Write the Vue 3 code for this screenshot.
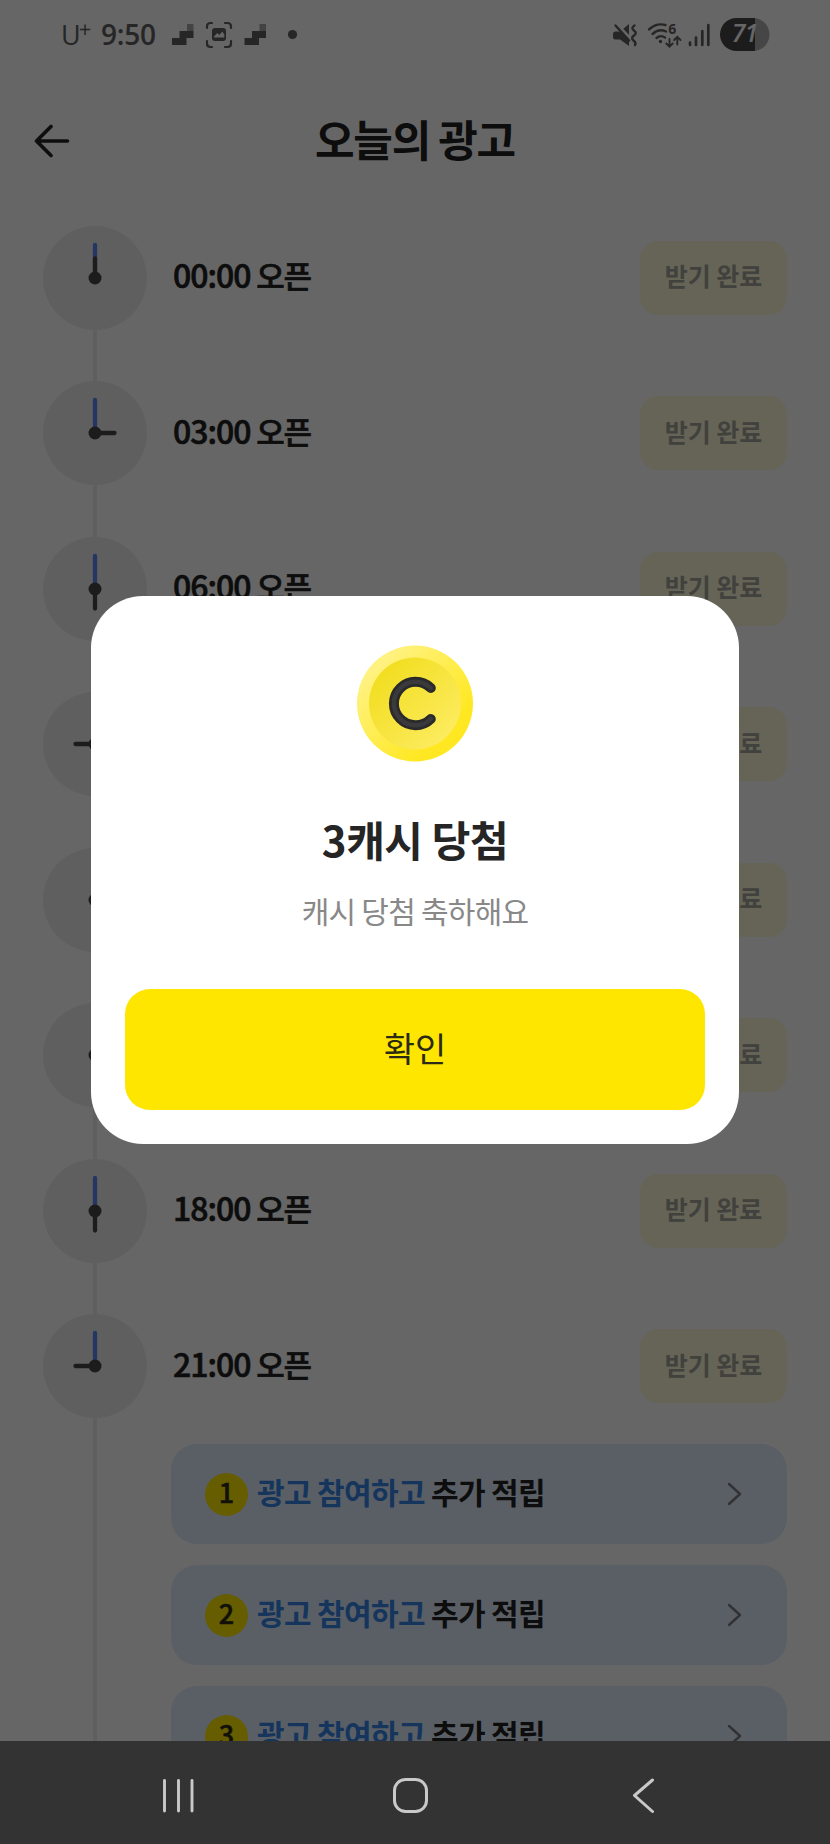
<script setup>
const rows = [
  { time: '00:00', angle: 0 },
  { time: '03:00', angle: 90 },
  { time: '06:00', angle: 180 },
  { time: '09:00', angle: 270 },
  { time: '12:00', angle: 0 },
  { time: '15:00', angle: 90 },
  { time: '18:00', angle: 180 },
  { time: '21:00', angle: 270, extras: [1, 2, 3] },
]
</script>

<template>
  <div class="phone">
    <div class="page">
      <div class="status">
        <span class="carrier">U<sup>+</sup></span>
        <span class="clock">9:50</span>
        <svg class="notif" width="126" height="28" viewBox="0 0 126 28">
          <g id="stairs">
            <path d="M0 17h7.500v-7h7.500h6.500v7h-7v7H0z" fill="#5f5f5f" />
            <path d="M15 3h6.500v7H15z" fill="#a8a8a8" />
          </g>
          <use href="#stairs" x="72.500" />
          <g fill="none" stroke="#606060" stroke-width="2.200" stroke-linecap="round">
            <path d="M35 7V5.500Q35 2 38.500 2H40M53 2h2.500Q59 2 59 5.500V7M59 20v2.500Q59 26 55.500 26H53M40 26h-1.500Q35 26 35 22.500V20" />
          </g>
          <path d="M43 7h8q3 0 3 3v7q0 3-3 3h-8q-3 0-3-3v-7q0-3 3-3z" fill="#606060" />
          <path d="M42 15.500l3.300-3.500 2 2 3-3.500 2 3v3H42z" fill="#fff" />
          <circle cx="120.500" cy="13.500" r="4.600" fill="#606060" />
        </svg>
        <svg class="signals" width="164" height="40" viewBox="608 15 164 40">
          <path d="M613 34q0-2.500 2.500-2.500H620l9-7.500v22L620 39.500h-4.500q-2.500 0-2.500-2.500z" fill="#606060" />
          <path d="M617 24l13 14" stroke="#fff" stroke-width="2.600" />
          <path d="M615.500 25.500l13.500 15" stroke="#606060" stroke-width="2.400" stroke-linecap="round" />
          <path d="M634.500 25.500q-4 2.500-.5 5t0 5-.5 5 1.500 4.500" fill="none" stroke="#606060" stroke-width="2.400" stroke-linecap="round" />
          <g fill="none" stroke="#606060" stroke-width="2.400" stroke-linecap="round">
            <path d="M649 29.500Q656.500 22.500 665.500 25M652.500 34Q659 28 666 31.500M656.500 38Q660.500 34.500 665 37.500" />
            <path d="M669.500 39v7.500M666.300 43.500l3.200 3.200 3.200-3.200M677.300 44.500V37M674.100 40l3.200-3.200 3.200 3.200" stroke-width="1.900" />
            <path d="M690 42.500V45M696 37.500V45M702.300 31V45M708.300 25V45" stroke-width="2.700" />
          </g>
          <circle cx="660.500" cy="41.500" r="1.700" fill="#606060" />
          <text x="672.300" y="34" class="gen">6</text>
          <path d="M736 18h17a16.500 16.500 0 0 1 0 33h-17z" fill="#b0b0b0" />
          <path d="M736.500 18H755v33h-18.500a16.500 16.500 0 0 1 0-33z" fill="#464646" />
          <text x="744.500" y="42" class="pct">71</text>
        </svg>
      </div>

      <header class="head">
        <svg class="back" width="36" height="34" viewBox="0 0 36 34">
          <path d="M33.500 17H2.500M17 2.500L2.500 17 17 31.500" fill="none" stroke="#252525" stroke-width="3.600" stroke-linecap="round" stroke-linejoin="round" />
        </svg>
        <h1>오늘의 광고</h1>
      </header>

      <ul class="list">
        <li v-for="r in rows" :key="r.time" class="row" :class="{ tall: r.extras }">
          <div class="rail">
            <svg width="104" height="104" viewBox="-52 -52 104 104">
              <circle r="52" fill="#eeeeee" />
              <path d="M0 0V-33" stroke="#5f87f5" stroke-width="4.300" stroke-linecap="round" />
              <path d="M0 0V-19.500" :transform="`rotate(${r.angle})`" stroke="#484848" stroke-width="4.300" stroke-linecap="round" />
              <circle r="6.500" fill="#484848" />
            </svg>
            <i class="line"></i>
          </div>
          <div class="body">
            <div class="slot">
              <span class="time"><span class="num">{{ r.time }}</span> 오픈</span>
              <span class="pill">받기 완료</span>
            </div>
            <div v-for="n in r.extras" :key="n" class="card">
              <b class="badge">{{ n }}</b>
              <span class="label"><em>광고 참여하고</em> 추가 적립</span>
              <svg class="chev" width="16" height="24" viewBox="0 0 16 24">
                <path d="M2 2l11 10L2 22" fill="none" stroke="#7d7d80" stroke-width="2.400" stroke-linecap="round" stroke-linejoin="round" />
              </svg>
            </div>
          </div>
        </li>
      </ul>
    </div>

    <div class="scrim">
      <section class="modal">
        <svg width="120" height="120" viewBox="-60 -60.500 120 120">
          <defs>
            <linearGradient id="rim" x1="0" y1="0" x2="1" y2="1">
              <stop offset=".1" stop-color="#fff38c" />
              <stop offset=".75" stop-color="#ffe822" />
            </linearGradient>
            <linearGradient id="face" x1="0" y1="0" x2="1" y2="1">
              <stop offset=".1" stop-color="#f1dd1d" />
              <stop offset=".9" stop-color="#fdec62" />
            </linearGradient>
          </defs>
          <circle r="58" fill="url(#rim)" />
          <circle r="46" fill="url(#face)" />
          <path d="M15.800-15.500A21.700 21.700 0 1 0 15.800 15.500" fill="none" stroke="#2a2a2a" stroke-width="10" stroke-linecap="round" />
          <path d="M15.800-15.500A21.700 21.700 0 1 0 15.800 15.500" fill="none" stroke="#3a3a3c" stroke-width="4.500" stroke-linecap="round" />
        </svg>
        <h2>3캐시 당첨</h2>
        <p>캐시 당첨 축하해요</p>
        <button type="button">확인</button>
      </section>
    </div>

    <nav class="nav">
      <svg width="830" height="103" viewBox="0 1741 830 103" fill="none" stroke="#c9c9c9" stroke-linecap="round" stroke-linejoin="round">
        <path d="M164.500 1780.500V1811M178.500 1780.500V1811M192 1780.500V1811" stroke-width="2.900" />
        <rect x="394.500" y="1779.500" width="32" height="32" rx="11" stroke-width="3" />
        <path d="M652.500 1780L634.500 1795.500 652.500 1811.500" stroke-width="3" />
      </svg>
    </nav>
  </div>
</template>

<style>
body { margin: 0; background: #666; }
</style>

<style scoped>
* { box-sizing: border-box; }
.phone {
  position: relative;
  width: 830px;
  height: 1844px;
  overflow: hidden;
  display: flex;
  flex-direction: column;
  font-family: "Noto Sans CJK KR", sans-serif;
}
.page { flex: 1; min-height: 0; overflow: hidden; background: #fff; }
.status { display: flex; align-items: center; height: 70px; padding-left: 61px; color: #606060; }
.carrier { width: 40px; font: 400 27px/40px "Open Sans", sans-serif; white-space: nowrap; }
.carrier sup { font-size: 22px; line-height: 0; vertical-align: 8px; margin-left: -2px; }
.clock { width: 71px; padding-bottom: 2px; font: 600 28px/40px "Open Sans", sans-serif; letter-spacing: -.2px; }
.signals { margin-left: 310px; }
.pct { font: italic 600 25px "Open Sans", sans-serif; fill: #fff; text-anchor: middle; letter-spacing: -1px; }
.gen { font: 700 14px "Open Sans", sans-serif; fill: #606060; text-anchor: middle; }
.head { display: grid; grid-template-columns: 104px 1fr 104px; align-items: center; height: 142px; }
.back { margin-left: 34px; }
h1 {
  margin: 0; padding-bottom: 7px; text-align: center; font-size: 43px; line-height: 60px;
  font-weight: 700; letter-spacing: -1.300px; color: #222;
}
.list { list-style: none; margin: 0; padding: 13.500px 43px 0; }
.row { display: flex; height: 155.570px; }
.row.tall { height: 600px; }
.rail { display: flex; flex-direction: column; align-items: center; width: 104px; flex: none; }
.rail svg { display: block; flex: none; }
.line { width: 4.500px; flex: 1; background: #eee; }
.body { flex: 1; padding-left: 24px; }
.slot { display: flex; justify-content: space-between; align-items: center; height: 104px; }
.time {
  padding: 0 0 6px 2px; font-size: 31px; line-height: 40px; font-weight: 500; letter-spacing: -1.200px;
  color: #222; -webkit-text-stroke: .6px #222;
}
.num { font-size: 32px; letter-spacing: -1px; }
.pill {
  width: 147px; height: 74px; padding-bottom: 5px; border-radius: 18px; background: #fffad8;
  display: grid; place-items: center; font-size: 25px; font-weight: 700; color: #a2a298;
}
.card {
  display: flex; align-items: center; height: 100px; margin-top: 21px;
  padding: 0 44px 0 34px; border-radius: 26px; background: #e1eeff;
}
.slot + .card { margin-top: 26px; }
.badge {
  display: grid; place-items: center; width: 43px; height: 43px; padding-bottom: 4px; border-radius: 50%;
  background: #ffe600; color: #2b2b1a; font-size: 27px; line-height: 38px; font-weight: 500;
  -webkit-text-stroke: .5px #2b2b1a;
}
.label {
  flex: 1; margin-left: 9px; padding-bottom: 6px; font-size: 30px; font-weight: 700;
  letter-spacing: -.650px; color: #222; white-space: nowrap;
}
.label em { font-style: normal; color: #3585e6; }
.scrim {
  position: absolute; inset: 0; display: grid; place-items: start center;
  padding-top: 596px; background: rgba(0, 0, 0, .6);
}
.modal {
  display: flex; flex-direction: column; align-items: center;
  width: 648px; height: 548px; padding: 47px 34px 34px; border-radius: 52px; background: #fff;
}
h2 { margin: 46px 0 0; font-size: 42px; line-height: 60px; font-weight: 700; letter-spacing: -.400px; color: #252525; }
p { margin: 19px 0 0; font-size: 30px; line-height: 44px; letter-spacing: -.750px; color: #888; }
button {
  width: 580px; height: 121px; margin-top: auto; padding: 0 0 4px; border: 0; border-radius: 25px;
  background: #ffe600; color: #2b2a15; font: 400 34px "Noto Sans CJK KR", sans-serif;
}
.nav { position: relative; height: 103px; background: #333; }
.nav svg { display: block; }
</style>
